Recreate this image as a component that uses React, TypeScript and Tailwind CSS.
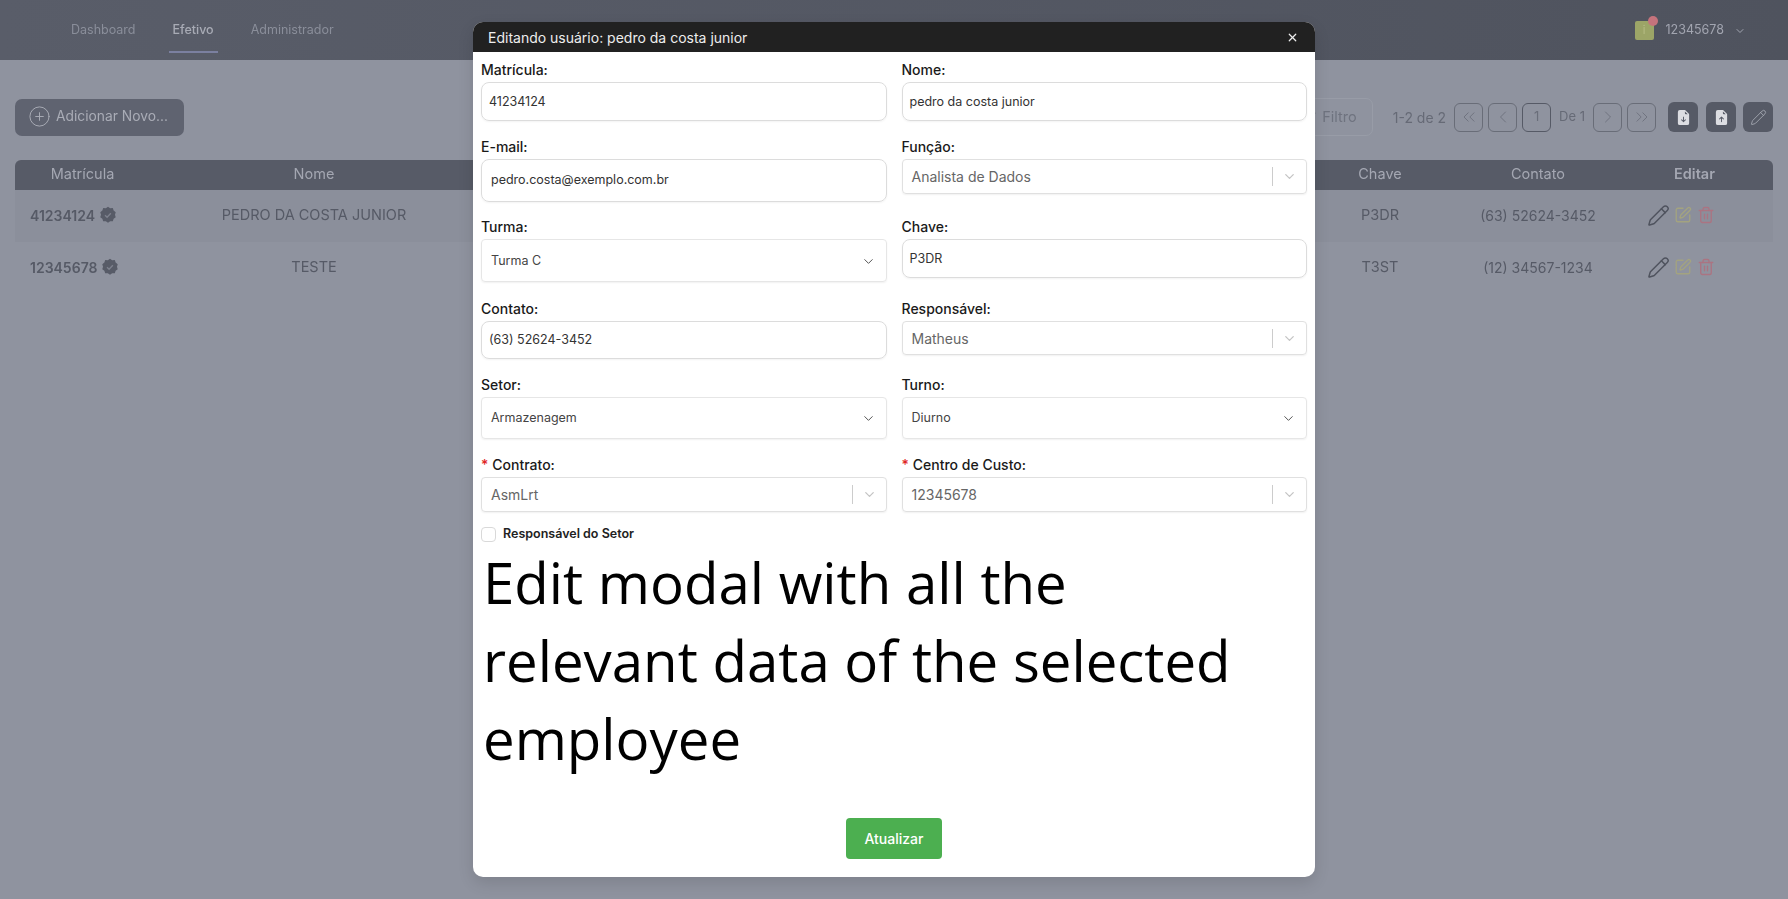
import React from "react";
import { ChevronDown, ChevronLeft, ChevronRight, ChevronsLeft, ChevronsRight, Pencil, SquarePen, Trash2, PlusCircle, Filter, X } from "lucide-react";
import { BsFileEarmarkArrowDownFill, BsFileEarmarkArrowUpFill } from "react-icons/bs";

const Badge = () => (
  <svg viewBox="0 0 24 24" className="w-[18px] h-[18px] shrink-0">
    <path fill="#575b67" d="M12 1l2.9 2 3.5-.2 1.1 3.3 2.8 2.1-1 3.4 1 3.4-2.8 2.1-1.1 3.3-3.5-.2-2.9 2-2.9-2-3.5.2-1.1-3.3-2.8-2.1 1-3.4-1-3.4 2.8-2.1 1.1-3.3 3.5.2z" />
    <path fill="none" stroke="#7d818d" strokeWidth="1.8" d="M8 12.2l2.8 2.8 5-5.4" />
  </svg>
);

const Row = ({ id, name, chave, tel, shaded }: { id: string; name: string; chave: string; tel: string; shaded?: boolean }) => (
  <div className={`grid grid-cols-[135px_328px_822px_160px_156px_157px] h-[52px] items-center pb-[2px] text-[14.5px] text-[#565a66] ${shaded ? "bg-[#8b8f9b]" : ""}`}>
    <div className="flex items-center gap-[4px] pl-[15px] text-[14px] font-semibold"><span>{id}</span><Badge /></div>
    <div className="text-center">{name}</div>
    <div />
    <div className="text-center">{chave}</div>
    <div className="text-center text-[14px]">{tel}</div>
    <div className="flex items-center pl-[31px]">
      <Pencil className="w-[23px] h-[23px] text-[#4f535e]" strokeWidth={1.5} />
      <SquarePen className="w-[18px] h-[18px] ml-[4px] text-[#a3a380]" strokeWidth={1.8} />
      <Trash2 className="w-[18px] h-[18px] ml-[5px] text-[#ab7482]" strokeWidth={1.8} />
    </div>
  </div>
);

const PageBtn = ({ children, strong }: { children: React.ReactNode; strong?: boolean }) => (
  <div className={`w-[29px] h-[29px] rounded-[6px] border flex items-center justify-center text-[#6a6e7a] ${strong ? "border-[#565a66]" : "border-[#696d78]"}`}>{children}</div>
);

const DarkBtn = ({ children }: { children: React.ReactNode }) => (
  <div className="w-[30px] h-[30px] rounded-[6px] bg-[#565a66] flex items-center justify-center text-[#dcdde2]">{children}</div>
);

const Label = ({ text, req }: { text: string; req?: boolean }) => (
  <div className="h-[22px] text-[14px] leading-[20px] font-medium text-[#1a1a1a]">
    {req && <span className="text-[#e02424] mr-[4px]">*</span>}
    {text}
  </div>
);

const Input = ({ value, h, pad }: { value: string; h: string; pad: string }) => (
  <div className={`${h} ${pad} flex items-center border border-[#dcdcdc] rounded-[8px] text-[12.5px] text-[#333] shadow-[0_1px_2px_rgba(0,0,0,0.05)]`}>{value}</div>
);

const NativeSelect = ({ value, h = "h-[42px]", pt = "" }: { value: string; h?: string; pt?: string }) => (
  <div className={`${h} ${pt} pl-[9px] pr-[10px] flex items-center justify-between border border-[#e6e6e6] rounded-[4px] text-[12.5px] text-[#444] shadow-[0_1px_2px_rgba(0,0,0,0.06)]`}>
    <span>{value}</span>
    <ChevronDown className="w-[15px] h-[15px] text-[#555]" strokeWidth={1.6} />
  </div>
);

const ComboSelect = ({ value, h = "h-[35px]" }: { value: string; h?: string }) => (
  <div className={`${h} pl-[9px] flex items-center border border-[#e0e0e0] rounded-[4px] text-[14px] text-[#666] shadow-[0_1px_2px_rgba(0,0,0,0.06)]`}>
    <span className="flex-1">{value}</span>
    <span className="w-px h-[19px] bg-[#ccc]" />
    <span className="w-[33px] flex justify-center"><ChevronDown className="w-[15px] h-[15px] text-[#c4c4c4]" strokeWidth={2} /></span>
  </div>
);

export default function App() {
  return (
    <div className="relative w-[1788px] h-[899px] overflow-hidden bg-[#8f939f] font-['Inter',sans-serif]">
      <header className="h-[60px] flex items-center justify-between pl-[71px] pr-[42px] pt-[1px] bg-gradient-to-r from-[#595d69] to-[#4f535e] text-[12.5px] blur-[0.4px]">
        <nav className="flex items-center gap-[37px] text-[#8a8e9a]">
          <span>Dashboard</span>
          <span className="relative font-medium text-[#a8abb5]">Efetivo<span className="absolute left-[-3px] right-[-4px] top-[30px] h-[2px] bg-[#7b80a0]" /></span>
          <span>Administrador</span>
        </nav>
        <div className="flex items-center text-[#a2a5b0]">
          <div className="relative w-[19px] h-[19px] rounded-[2px] bg-[#9ca567] flex items-center justify-center text-[11px] text-[#b6bc85]">
            i<span className="absolute -top-[5px] -right-[4px] w-[10px] h-[10px] rounded-full bg-[#c5737c]" />
          </div>
          <span className="ml-[12px]">12345678</span>
          <ChevronDown className="w-[12px] h-[12px] ml-[10px]" strokeWidth={2} />
        </div>
      </header>

      <main className="px-[15px] blur-[0.4px]">
        <div className="flex items-center justify-between pt-[38px]">
          <div className="w-[169px] h-[37px] pb-[1px] rounded-[7px] bg-[#5f6370] flex items-center pl-[13px] gap-[5px] text-[13.8px] text-[#a9acb6]">
            <PlusCircle className="w-[23px] h-[23px]" strokeWidth={1} />
            <span>Adicionar Novo...</span>
          </div>
          <div className="flex items-center text-[14px] text-[#666a76]">
            <div className="w-[74px] h-[38px] mr-[20px] border border-[#989ca7] rounded-[7px] flex items-center justify-end pr-[15px] gap-[6px] text-[14.5px] text-[#6f737f]">
              <Filter className="w-[13px] h-[13px]" />
              <span>Filtro</span>
            </div>
            <span className="mr-[8px]">1-2 de 2</span>
            <div className="flex items-center gap-[5px]">
              <PageBtn><ChevronsLeft className="w-[20px] h-[20px]" strokeWidth={1} /></PageBtn>
              <PageBtn><ChevronLeft className="w-[20px] h-[20px]" strokeWidth={1} /></PageBtn>
              <PageBtn strong><span className="text-[13px]">1</span></PageBtn>
            </div>
            <span className="mx-[8px] text-[13px]">De 1</span>
            <div className="flex items-center gap-[5px]">
              <PageBtn><ChevronRight className="w-[20px] h-[20px]" strokeWidth={1} /></PageBtn>
              <PageBtn><ChevronsRight className="w-[20px] h-[20px]" strokeWidth={1} /></PageBtn>
            </div>
            <div className="flex items-center ml-[12px]">
              <DarkBtn><BsFileEarmarkArrowDownFill className="w-[15px] h-[15px]" /></DarkBtn>
              <span className="w-[8px]" />
              <DarkBtn><BsFileEarmarkArrowUpFill className="w-[15px] h-[15px]" /></DarkBtn>
              <span className="w-[7px]" />
              <DarkBtn><Pencil className="w-[17px] h-[17px] text-[#a8abb5]" strokeWidth={1.2} /></DarkBtn>
            </div>
          </div>
        </div>

        <div className="mt-[24px]">
          <div className="grid grid-cols-[135px_328px_822px_160px_156px_157px] h-[30px] items-center pb-[2px] rounded-t-[6px] bg-[#575b67] text-[14.5px] text-[#a4a7b2]">
            <div className="text-center">Matrícula</div>
            <div className="text-center">Nome</div>
            <div />
            <div className="text-center">Chave</div>
            <div className="text-center">Contato</div>
            <div className="text-center font-semibold">Editar</div>
          </div>
          <Row id="41234124" name="PEDRO DA COSTA JUNIOR" chave="P3DR" tel="(63) 52624-3452" shaded />
          <Row id="12345678" name="TESTE" chave="T3ST" tel="(12) 34567-1234" />
        </div>
      </main>

      <div className="absolute left-[473px] top-[22px] w-[842px] h-[855px] flex flex-col bg-white rounded-[10px] shadow-[0_6px_16px_rgba(0,0,0,0.12)] overflow-hidden">
        <div className="h-[30px] shrink-0 bg-[#212121] flex items-center justify-between pl-[15px] pr-[16px] text-[14px] text-[#eeeeee]">
          <span>Editando usuário: pedro da costa junior</span>
          <X className="w-[13px] h-[13px]" strokeWidth={2.2} />
        </div>
        <div className="flex-1 flex flex-col px-[8px] pt-[8px]">
          <div className="grid grid-cols-2 gap-x-[15px] grid-rows-[77px_80px_82px_76px_80px_57px]">
            <div><Label text="Matrícula:" /><Input value="41234124" h="h-[39px]" pad="pl-[7px] pt-[2px]" /></div>
            <div><Label text="Nome:" /><Input value="pedro da costa junior" h="h-[39px]" pad="pl-[7px] pt-[2px]" /></div>
            <div><Label text="E-mail:" /><Input value="pedro.costa@exemplo.com.br" h="h-[43px]" pad="pl-[9px]" /></div>
            <div><Label text="Função:" /><ComboSelect value="Analista de Dados" /></div>
            <div><Label text="Turma:" /><NativeSelect value="Turma C" h="h-[43px]" pt="pt-[2px]" /></div>
            <div><Label text="Chave:" /><Input value="P3DR" h="h-[39px]" pad="pl-[7px] pt-[2px]" /></div>
            <div><Label text="Contato:" /><Input value="(63) 52624-3452" h="h-[38px]" pad="pl-[7px]" /></div>
            <div><Label text="Responsável:" /><ComboSelect value="Matheus" h="h-[34px]" /></div>
            <div><Label text="Setor:" /><NativeSelect value="Armazenagem" /></div>
            <div><Label text="Turno:" /><NativeSelect value="Diurno" /></div>
            <div><Label text="Contrato:" req /><ComboSelect value="AsmLrt" /></div>
            <div><Label text="Centro de Custo:" req /><ComboSelect value="12345678" /></div>
          </div>
          <div className="flex items-center gap-[7px] mt-[15px] h-[14px]">
            <span className="w-[15px] h-[15px] rounded-[4px] border border-[#d9d9d9]" />
            <span className="text-[12.5px] font-semibold text-[#222]">Responsável do Setor</span>
          </div>
          <p className="mt-[3px] ml-[2px] w-[780px] font-['Open_Sans',sans-serif] text-[56.4px] leading-[78px] text-black">Edit modal with all the relevant data of the selected employee</p>
          <div className="flex justify-center mt-[40px]">
            <div className="w-[96px] h-[41px] rounded-[4px] bg-[#4caf50] flex items-center justify-center text-[14px] font-medium text-white">Atualizar</div>
          </div>
        </div>
      </div>
    </div>
  );
}
